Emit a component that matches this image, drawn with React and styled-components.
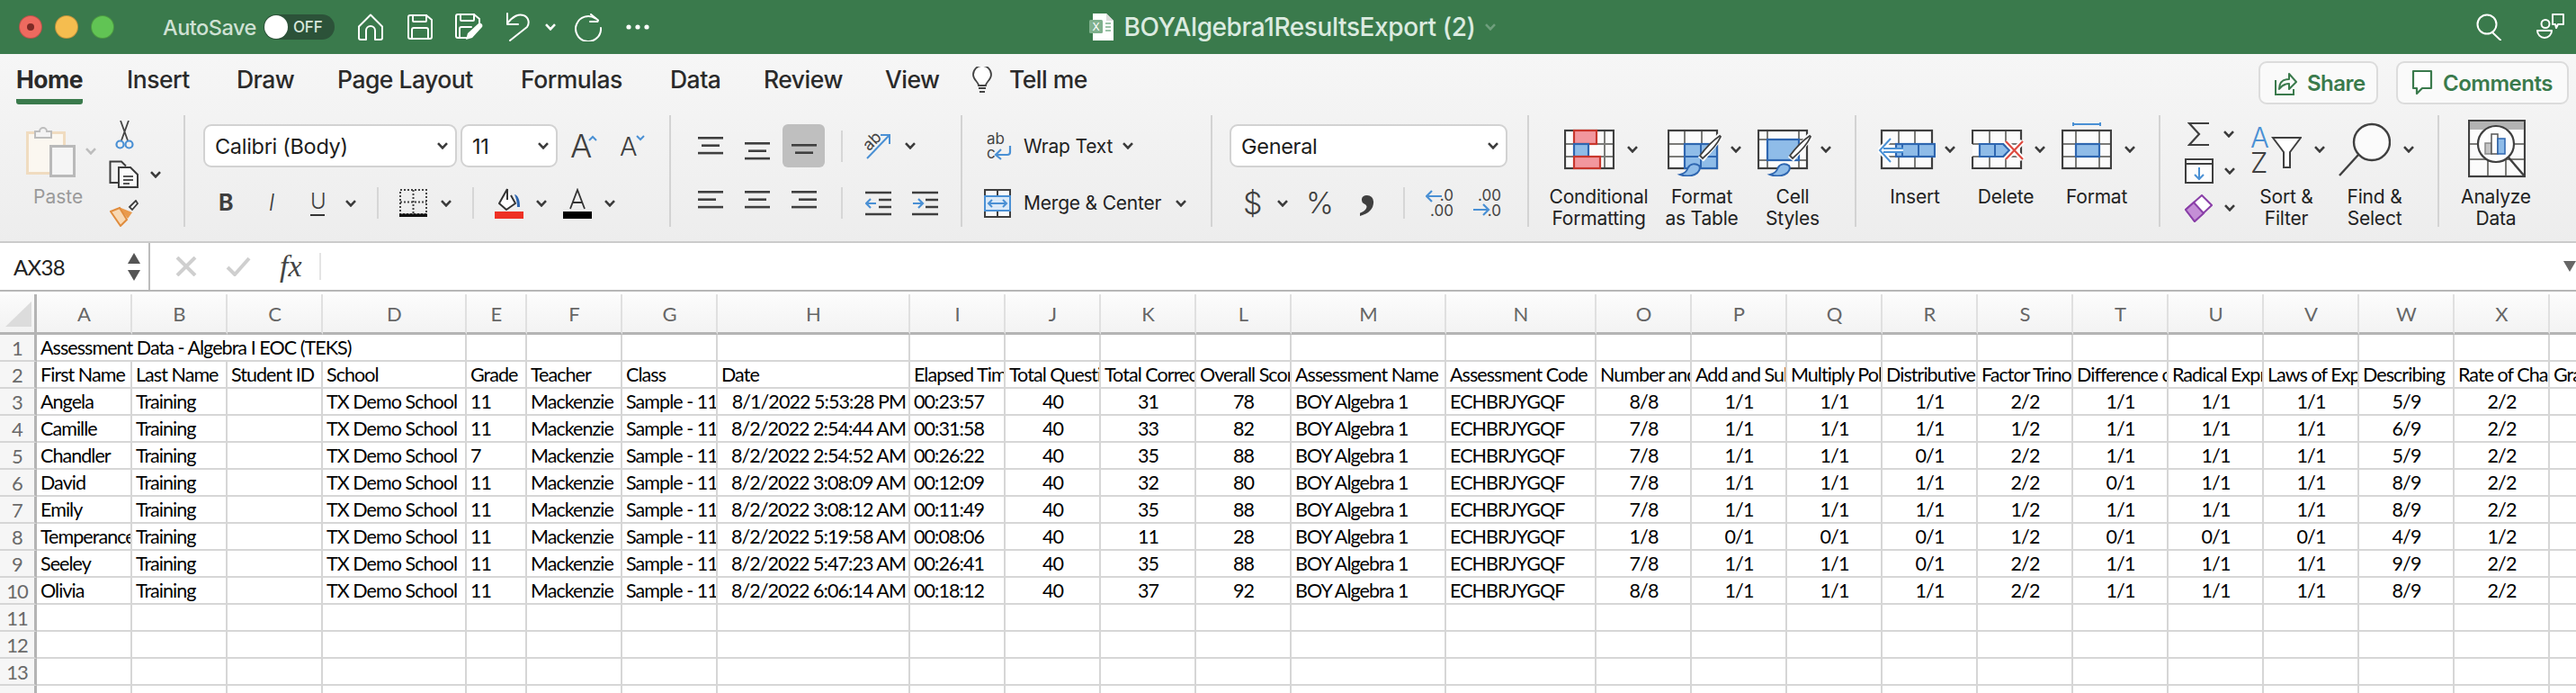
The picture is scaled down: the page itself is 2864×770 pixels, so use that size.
import React from 'react';
import styled, { createGlobalStyle } from 'styled-components';

const GlobalStyle = createGlobalStyle`
  html, body { margin: 0; padding: 0; background: #fff; }
  body { width: 2864px; height: 770px; overflow: hidden; font-family: Inter, "Liberation Sans", sans-serif; }
`;

const DARK = '#3f3f3f';
const GREEN = '#3a7a4c';
const BLUE = '#2e66b0';
const LIGHTBLUE = '#8fbce8';
const SKY = '#4a90d4';
const GRAYLINE = '#7b7b78';

const Window = styled.div`
  width: 2864px;
  height: 770px;
  overflow: hidden;
  display: flex;
  flex-direction: column;
`;

const Svg = styled.svg`
  display: block;
  flex: none;
  margin-left: ${p => p.$ml || 0}px;
`;

/* title bar */
const TitleBar = styled.div`
  height: 60px;
  flex: none;
  background: ${GREEN};
  display: flex;
  align-items: center;
`;
const TitleSide = styled.div`
  flex: 1;
  display: flex;
  align-items: center;
  justify-content: ${p => (p.$right ? 'flex-end' : 'flex-start')};
  padding: ${p => (p.$right ? '0 12px 0 0' : '0 0 0 21px')};
`;
const Light = styled.span`
  width: 26px;
  height: 26px;
  border-radius: 50%;
  flex: none;
  margin-left: ${p => p.$ml || 0}px;
  background: ${p => p.$color};
  border: 1px solid rgba(0, 0, 0, 0.22);
  box-sizing: border-box;
  display: flex;
  align-items: center;
  justify-content: center;
  &::after {
    content: '';
    display: ${p => (p.$dot ? 'block' : 'none')};
    width: 8px;
    height: 8px;
    border-radius: 50%;
    background: #7d2a25;
  }
`;
const AutoSave = styled.span`
  margin-left: 54px;
  width: 112px;
  flex: none;
  font-size: 23.5px;
  color: #cfe1d4;
  font-weight: 500;
  letter-spacing: -0.5px;
`;
const Toggle = styled.div`
  width: 79px;
  height: 28px;
  flex: none;
  border-radius: 14px;
  background: #2c5239;
  display: flex;
  align-items: center;
  box-sizing: border-box;
`;
const Knob = styled.span`
  width: 26px;
  height: 26px;
  margin-left: 1px;
  border-radius: 50%;
  background: #fff;
`;
const ToggleText = styled.span`
  margin-left: 6px;
  font-size: 17px;
  font-weight: 500;
  color: #d8e6dc;
  letter-spacing: -0.2px;
`;
const DocTitle = styled.div`
  display: flex;
  align-items: center;
  flex: none;
`;
const DocName = styled.span`
  margin-left: 11px;
  font-size: 28px;
  font-weight: 500;
  letter-spacing: -0.4px;
  color: #dcebe0;
`;

/* ribbon */
const Ribbon = styled.div`
  height: 210px;
  flex: none;
  box-sizing: border-box;
  background: linear-gradient(#f6f6f6, #ededed);
  border-bottom: 2px solid #cbcbcb;
`;
const TabRow = styled.div`
  height: 68px;
  display: flex;
  align-items: flex-start;
  padding: 0 8px 0 18px;
`;
const Tab = styled.div`
  width: ${p => p.$w}px;
  flex: none;
`;
const TabLabel = styled.div`
  display: inline-block;
  box-sizing: content-box;
  height: 28px;
  line-height: 28px;
  padding-top: 14px;
  padding-bottom: 8px;
  font-size: 26.5px;
  font-weight: ${p => (p.$active ? 700 : 500)};
  letter-spacing: -0.5px;
  color: #2a2a2a;
  white-space: nowrap;
  border-bottom: 6px solid ${p => (p.$active ? GREEN : 'transparent')};
  border-radius: 3px;
`;
const TabIcon = styled.div`
  width: 42px;
  flex: none;
  padding-top: 14px;
`;
const TabSpace = styled.div`
  flex: 1;
`;
const OutlineButton = styled.div`
  width: ${p => p.$w}px;
  height: 48px;
  margin-top: 8px;
  margin-left: ${p => p.$ml || 0}px;
  flex: none;
  box-sizing: border-box;
  border: 2px solid #dcdcdc;
  border-radius: 9px;
  background: #fafafa;
  display: flex;
  align-items: center;
  padding-left: 15px;
  gap: 11px;
  font-size: 24px;
  font-weight: 600;
  letter-spacing: -0.5px;
  color: ${GREEN};
`;

const Groups = styled.div`
  display: flex;
  height: 124px;
`;
const Group = styled.div`
  width: ${p => p.$w}px;
  flex: none;
  box-sizing: border-box;
  padding-left: ${p => p.$pad || 0}px;
  border-right: ${p => (p.$last ? 0 : '2px solid #d3d3d3')};
  display: flex;
  flex-direction: ${p => (p.$stack ? 'column' : 'row')};
`;
const Line = styled.div`
  display: flex;
  align-items: center;
  height: ${p => p.$h}px;
  margin-top: ${p => p.$mt || 0}px;
`;
const Select = styled.div`
  width: ${p => p.$w}px;
  height: 48px;
  flex: none;
  margin-left: ${p => p.$ml || 0}px;
  box-sizing: border-box;
  border: 2px solid #d2d2d2;
  border-radius: 9px;
  background: #fff;
  display: flex;
  align-items: center;
  justify-content: space-between;
  padding: 0 8px 0 11px;
  font-size: 23.5px;
  letter-spacing: -0.3px;
  color: #1c1c1c;
`;
const Letter = styled.span`
  width: ${p => p.$w}px;
  flex: none;
  margin-left: ${p => p.$ml || 0}px;
  text-align: center;
  line-height: 1;
  font-family: ${p => (p.$serif ? '"Liberation Serif", serif' : 'Inter, "Liberation Sans", sans-serif')};
  font-size: ${p => p.$size}px;
  font-weight: ${p => p.$weight || 400};
  font-style: ${p => (p.$italic ? 'italic' : 'normal')};
  transform: translateY(${p => p.$lift || 0}px);
  color: ${DARK};
`;
const UnderLetter = styled(Letter)`
  border-bottom: 2px solid #333;
  padding-bottom: 2px;
`;
const Divider = styled.span`
  width: 2px;
  height: 35px;
  flex: none;
  margin-left: ${p => p.$ml || 0}px;
  background: #d6d6d6;
`;
const Selected = styled.div`
  width: 47px;
  height: 48px;
  flex: none;
  margin-left: ${p => p.$ml || 0}px;
  border-radius: 6px;
  background: #bfbfbf;
  display: flex;
  justify-content: center;
`;
const InlineText = styled.span`
  width: ${p => p.$w}px;
  flex: none;
  margin-left: ${p => p.$ml || 0}px;
  font-size: 21px;
  letter-spacing: -0.2px;
  color: #222;
  white-space: nowrap;
`;
const PasteCol = styled.div`
  width: 92px;
  margin-left: 29px;
  flex: none;
  padding-top: 10px;
`;
const PasteLabel = styled.div`
  margin: 10px 0 0 8px;
  height: 24px;
  line-height: 24px;
  font-size: 21px;
  color: #9a9a9a;
`;
const SmallCol = styled.div`
  flex: none;
  padding-top: ${p => p.$pt || 0}px;
  display: flex;
  flex-direction: column;
  width: ${p => p.$w}px;
`;
const BigButton = styled.div`
  width: ${p => p.$w}px;
  flex: none;
  display: flex;
  flex-direction: column;
`;
const BigIconRow = styled.div`
  height: 76px;
  flex: none;
  display: flex;
  align-items: center;
  margin-bottom: 3px;
`;
const BigLabel = styled.div`
  flex: none;
  text-align: center;
  line-height: 24px;
  font-size: 21px;
  letter-spacing: -0.2px;
  color: #222;
  white-space: pre-line;
`;

/* formula bar */
const FormulaBar = styled.div`
  height: 54px;
  flex: none;
  box-sizing: border-box;
  border-bottom: 2px solid #b6b6b6;
  background: #fff;
  display: flex;
  align-items: stretch;
`;
const NameBox = styled.div`
  width: 167px;
  flex: none;
  box-sizing: border-box;
  border-right: 2px solid #bcbcbc;
  display: flex;
  align-items: center;
  justify-content: space-between;
  padding: 0 9px 0 15px;
  font-family: Lato, sans-serif;
  font-size: 24px;
  letter-spacing: -0.7px;
  color: #222;
`;
const FormulaTools = styled.div`
  display: flex;
  align-items: center;
  flex: 1;
`;
const FxLabel = styled.span`
  margin-left: 32px;
  width: 28px;
  font-family: "Liberation Serif", serif;
  font-style: italic;
  font-size: 34px;
  color: #444;
  white-space: nowrap;
`;
const FormulaSep = styled.span`
  margin-left: 16px;
  width: 2px;
  height: 30px;
  background: #e4e4e4;
`;
const FormulaInput = styled.div`
  flex: 1;
`;

/* sheet */
const Sheet = styled.div`
  margin-top: 3px;
  display: grid;
  grid-template-columns: 41px 106px 106px 106px 160px 67px 106px 106px 214px 106px 106px 106px 106px 172px 167px repeat(11, 106px);
  grid-template-rows: 45px;
  grid-auto-rows: 30px;
  font-family: Lato, sans-serif;
  font-size: 21.5px;
  letter-spacing: -0.95px;
  color: #000;
`;
const Corner = styled.div`
  box-sizing: border-box;
  border-right: 3px solid #b4b4b4;
  border-bottom: 3px solid #b4b4b4;
  background: linear-gradient(#fbfbfb, #f2f2f2);
`;
const ColHead = styled.div`
  box-sizing: border-box;
  border-right: 2px solid #e0e0e0;
  border-bottom: 3px solid #b4b4b4;
  background: linear-gradient(#fcfcfc, #f3f3f3);
  display: flex;
  align-items: center;
  justify-content: center;
  color: #666;
  font-size: 22px;
`;
const RowHead = styled.div`
  box-sizing: border-box;
  border-right: 3px solid #b4b4b4;
  border-bottom: 2px solid #d6d6d6;
  background: #f6f6f6;
  text-align: center;
  line-height: 29px;
  color: #6a6a6a;
  font-size: 22px;
`;
const Cell = styled.div`
  grid-column: span ${p => p.$span || 1};
  box-sizing: border-box;
  border-right: 2px solid #d6d6d6;
  border-bottom: 2px solid #d6d6d6;
  padding: 0 3px 0 4px;
  line-height: 29px;
  white-space: nowrap;
  overflow: hidden;
  text-align: ${p => p.$align || 'left'};
`;

/* --- icons --- */
const Chevron = ({ color = '#3a3a3a', ...p }) => (
  <Svg width="12" height="8" viewBox="0 0 12 8" {...p}>
    <path d="M1 1.2 6 6.4l5-5.2" fill="none" stroke={color} strokeWidth="2.6" />
  </Svg>
);

const WhiteStroke = { fill: 'none', stroke: '#fff', strokeWidth: 2, strokeLinejoin: 'round', strokeLinecap: 'round' };

const HomeIcon = p => (
  <Svg width="30" height="30" viewBox="0 0 30 30" {...p}>
    <path {...WhiteStroke} d="M2 14.5 15 1.5l13 13V27a2 2 0 0 1-2 2h-6V19a5 5 0 0 0-10 0v10H4a2 2 0 0 1-2-2z" />
  </Svg>
);
const SaveIcon = p => (
  <Svg width="28" height="28" viewBox="0 0 28 28" {...p}>
    <path {...WhiteStroke} d="M3 1h18l6 5v19a2 2 0 0 1-2 2H3a2 2 0 0 1-2-2V3a2 2 0 0 1 2-2z" />
    <path {...WhiteStroke} d="M6 1v6a1 1 0 0 0 1 1h13a1 1 0 0 0 1-1V1M5 27V17a2 2 0 0 1 2-2h14a2 2 0 0 1 2 2v10" />
  </Svg>
);
const SaveEditIcon = p => (
  <Svg width="32" height="30" viewBox="0 0 32 30" {...p}>
    <path {...WhiteStroke} d="M13 27H3a2 2 0 0 1-2-2V3a2 2 0 0 1 2-2h18l6 5v9" />
    <path {...WhiteStroke} d="M6 1v6a1 1 0 0 0 1 1h13a1 1 0 0 0 1-1V1M5 27V17a2 2 0 0 1 2-2h11" />
    <path d="M12 29l2-7L26 11c2-1.5 5.5 1.5 4 4L19 27z" fill="#fff" />
  </Svg>
);
const UndoIcon = p => (
  <Svg width="28" height="32" viewBox="0 0 28 32" {...p}>
    <path {...WhiteStroke} d="M2 1v12h12" />
    <path {...WhiteStroke} d="M2 12C8 4 15 1 20 3c6 2 7 9 4 13L5 31" />
  </Svg>
);
const RedoIcon = p => (
  <Svg width="30" height="31" viewBox="0 0 30 31" {...p}>
    <path {...WhiteStroke} d="M23 5.5A14 14 0 1 0 29 16" />
    <path {...WhiteStroke} d="M18 1l8 6.5-0.5 1.5H17" />
  </Svg>
);
const DotsIcon = p => (
  <Svg width="28" height="8" viewBox="0 0 28 8" {...p}>
    <circle cx="4" cy="4" r="2.6" fill="#fff" />
    <circle cx="14" cy="4" r="2.6" fill="#fff" />
    <circle cx="24" cy="4" r="2.6" fill="#fff" />
  </Svg>
);
const FileIcon = p => (
  <Svg width="28" height="30" viewBox="0 0 28 30" {...p}>
    <path d="M4 0h15l8 8v22H4z" fill="#fff" />
    <path d="M19 0l8 8h-8z" fill="#dcdcdc" />
    <rect x="0" y="7" width="15" height="15" rx="1.5" fill="#7fb08d" />
    <text x="7.5" y="19" textAnchor="middle" fontSize="12" fill="#fff" fontFamily="Inter, sans-serif">X</text>
    <path d="M18 10h6v2h-6zM18 14h6v2h-6zM18 18h6v2h-6z" fill="#9cc3a8" />
  </Svg>
);
const SearchIcon = p => (
  <Svg width="28" height="30" viewBox="0 0 28 30" {...p}>
    <circle cx="12" cy="12" r="10.5" {...WhiteStroke} />
    <path {...WhiteStroke} d="M18 21l9 8.5" />
  </Svg>
);
const PeopleIcon = p => (
  <Svg width="32" height="32" viewBox="0 0 32 32" {...p}>
    <circle cx="10" cy="12.5" r="4.5" {...WhiteStroke} />
    <path {...WhiteStroke} d="M1 20h16a8 8 0 0 1-16 0z" />
    <path {...WhiteStroke} d="M18 2h12v11h-6l-2 4-1-4h-3z" />
  </Svg>
);

const BulbIcon = p => (
  <Svg width="24" height="30" viewBox="0 0 24 30" {...p}>
    <path d="M8 21c0-4-6-6-6-12a10 10 0 0 1 20 0c0 6-6 8-6 12z" fill="#fff" stroke="#444" strokeWidth="1.8" />
    <path d="M8 24h8M9 28h6" stroke="#444" strokeWidth="2" />
  </Svg>
);
const ShareIcon = p => (
  <Svg width="26" height="30" viewBox="0 0 26 30" {...p}>
    <path d="M2 12v16h20v-6" fill="none" stroke={GREEN} strokeWidth="2" />
    <path d="M6 22c0-7 4-11 11-11V5l8 9-8 8v-6c-5 0-8 2-11 6z" fill="none" stroke={GREEN} strokeWidth="2" strokeLinejoin="round" />
  </Svg>
);
const CommentIcon = p => (
  <Svg width="24" height="30" viewBox="0 0 24 30" {...p}>
    <path d="M2 2h20v19H12l-6 6v-6H2z" fill="#fff" stroke={GREEN} strokeWidth="2.2" strokeLinejoin="round" />
  </Svg>
);

const PasteIcon = p => (
  <Svg width="55" height="59" viewBox="0 0 55 59" {...p}>
    <rect x="1.5" y="9.5" width="41" height="45" fill="#fbf7f0" stroke="#f0dcc0" strokeWidth="3" />
    <path d="M10 15V8h5a4 4 0 0 1 8 0h5v7z" fill="#f3f3f3" stroke="#bdbdbd" strokeWidth="2" />
    <rect x="27.5" y="24.5" width="26" height="33" fill="#f5f5f5" stroke="#b9b9b9" strokeWidth="3" />
  </Svg>
);
const ScissorsIcon = p => (
  <Svg width="21" height="32" viewBox="0 0 21 32" {...p}>
    <path d="M7 22 15 0M14 22 6 0" stroke="#444" strokeWidth="1.8" fill="none" />
    <circle cx="5.5" cy="26.5" r="4" fill="none" stroke={SKY} strokeWidth="2.2" />
    <circle cx="15.5" cy="26.5" r="4" fill="none" stroke={SKY} strokeWidth="2.2" />
  </Svg>
);
const CopyIcon = p => (
  <Svg width="33" height="31" viewBox="0 0 33 31" {...p}>
    <path d="M11 25H1.5V1.5H14l5 5" fill="none" stroke="#3c3c3c" strokeWidth="2" />
    <path d="M11 8h13l8 8v14H11z" fill="#fbfbfb" stroke="#3c3c3c" strokeWidth="2" />
    <path d="M16 18h11M16 22h11M16 26h7" stroke="#555" strokeWidth="1.8" />
  </Svg>
);
const BrushIcon = p => (
  <Svg width="32" height="30" viewBox="0 0 32 30" {...p}>
    <path d="M22 8 29 1l2 3-6 7z" fill="#fff" stroke="#3c3c3c" strokeWidth="1.8" />
    <path d="M10 8 25 14l-5 7z" fill="#e99a4c" />
    <path d="M1 13l10-4 8 13-7 7z" fill="#f8d9b4" stroke="#e08c3d" strokeWidth="2" />
  </Svg>
);
const CaretSvg = styled(Svg)`
  align-self: flex-start;
  margin-top: 12px;
`;
const CaretUp = ({ color = SKY, down, ...p }) => (
  <CaretSvg width="10" height="7" viewBox="0 0 10 7" {...p}>
    <path d={down ? 'M1 1l4 4 4-4' : 'M1 6l4-4 4 4'} fill="none" stroke={color} strokeWidth="2" />
  </CaretSvg>
);
const BorderIcon = p => (
  <Svg width="31" height="31" viewBox="0 0 31 31" {...p}>
    <path d="M1 1h29v27H1zM15.5 1v27M1 14.5h29" fill="none" stroke="#444" strokeWidth="2" strokeDasharray="2 2" />
    <rect x="0" y="27.5" width="31" height="3.5" fill="#111" />
  </Svg>
);
const FillIcon = p => (
  <Svg width="32" height="34" viewBox="0 0 32 34" {...p}>
    <path d="M14 1 5 17l8 7 10-7-5-9" fill="#fff" stroke="#333" strokeWidth="2" strokeLinejoin="round" />
    <path d="M14 1v12" stroke="#333" strokeWidth="2" />
    <path d="M22 7c4 1 6 6 6 14h-3c0-5-1-9-3-14z" fill={BLUE} />
    <rect x="0" y="26" width="32" height="8" fill="#ee3124" />
  </Svg>
);
const AlignIcon = ({ top, kind = 'c', ...p }) => {
  const w = [28, 20, 28];
  const xs = i => {
    if (kind === 'l') return 0;
    if (kind === 'r') return 28 - w[i];
    return (28 - w[i]) / 2;
  };
  return (
    <Svg width="28" height="36" viewBox="0 0 28 36" {...p}>
      {[0, 1, 2].map(i => (
        <rect key={i} x={xs(i)} y={top + i * 8.4} width={w[i]} height="2.6" fill="#3f3f3f" />
      ))}
    </Svg>
  );
};
const OrientIcon = p => (
  <Svg width="31" height="32" viewBox="0 0 31 32" {...p}>
    <text x="0" y="18" fontSize="18" fill="#444" fontFamily="Inter, sans-serif" transform="rotate(-45 8 14)">ab</text>
    <path d="M3 30 27 5M18 4h10v10" fill="none" stroke={SKY} strokeWidth="2" />
  </Svg>
);
const IndentIcon = ({ reverse, ...p }) => (
  <Svg width="29" height="28" viewBox="0 0 29 28" {...p}>
    <path d="M0 2h29M0 26h29M15 10h14M15 18h14" stroke="#3f3f3f" strokeWidth="2.6" />
    <path d={reverse ? 'M12 14H1M6 9l-5 5 5 5' : 'M1 14h11M7 9l5 5-5 5'} fill="none" stroke={SKY} strokeWidth="2.2" />
  </Svg>
);
const WrapIcon = p => (
  <Svg width="30" height="32" viewBox="0 0 30 32" {...p}>
    <text x="0" y="14" fontSize="17" fill="#444" fontFamily="Inter, sans-serif">ab</text>
    <text x="0" y="30" fontSize="17" fill="#444" fontFamily="Inter, sans-serif">c</text>
    <path d="M26 16v7a3 3 0 0 1-3 3H11M16 20l-6 6 6 5" fill="none" stroke={SKY} strokeWidth="2.2" />
  </Svg>
);
const MergeIcon = p => (
  <Svg width="30" height="32" viewBox="0 0 30 32" {...p}>
    <path d="M1 1h28v30H1zM15 1v7M15 24v7" fill="#fafafa" stroke="#3f3f3f" strokeWidth="2" />
    <rect x="1" y="8" width="28" height="16" fill="#dbeaf8" stroke={SKY} strokeWidth="2" />
    <path d="M5 16h20M9 12l-4 4 4 4M21 12l4 4-4 4" fill="none" stroke={SKY} strokeWidth="2" />
  </Svg>
);
const DecimalIcon = ({ increase, ...p }) => (
  <Svg width="32" height="34" viewBox="0 0 32 34" {...p}>
    {increase ? (
      <>
        <text x="32" y="14" textAnchor="end" fontSize="17" fill="#444" fontFamily="Inter, sans-serif">.00</text>
        <text x="32" y="31" textAnchor="end" fontSize="17" fill="#444" fontFamily="Inter, sans-serif">.0</text>
        <path d="M1 24h17M12 18l6 6-6 6" fill="none" stroke={SKY} strokeWidth="2.2" />
      </>
    ) : (
      <>
        <text x="31" y="14" textAnchor="end" fontSize="17" fill="#444" fontFamily="Inter, sans-serif">.0</text>
        <text x="31" y="31" textAnchor="end" fontSize="17" fill="#444" fontFamily="Inter, sans-serif">.00</text>
        <path d="M18 9H1M7 3 1 9l6 6" fill="none" stroke={SKY} strokeWidth="2.2" />
      </>
    )}
  </Svg>
);

/* sheet-like drawing used by the big ribbon icons */
const GridArt = ({ x = 1, w = 54, vs = [], hs = [], notch }) => (
  <>
    <rect x={x} y="9" width={w} height="42" fill="#fbfbfb" />
    {vs.map(v => <path key={`v${v}`} d={`M${x + v} 9v42`} stroke={GRAYLINE} strokeWidth="2" />)}
    {hs.map(h => <path key={`h${h}`} d={`M${x} ${9 + h}h${w}`} stroke={GRAYLINE} strokeWidth="2" />)}
    {notch
      ? <path d={`M${x} 24V9h${w}v42H${x}V38`} fill="none" stroke={DARK} strokeWidth="2.2" />
      : <rect x={x} y="9" width={w} height="42" fill="none" stroke={DARK} strokeWidth="2.2" />}
  </>
);
const PaintBrush = () => (
  <>
    <path d="M59 15 37 41" stroke="#fff" strokeWidth="8" />
    <path d="M58 15c-6 4-16 14-22 22l3 3c8-7 17-17 20-24z" fill="#fff" stroke={DARK} strokeWidth="1.8" />
    <path d="M14 58c5-1 7-3 9-8 2-4 8-5 12-2 2 3 0 8-5 10-5 2-11 2-16 0z" fill={LIGHTBLUE} stroke={BLUE} strokeWidth="2" />
  </>
);
const ConditionalIcon = p => (
  <Svg width="56" height="60" viewBox="0 0 56 60" {...p}>
    <GridArt vs={[10, 26, 44]} hs={[15, 29]} />
    <rect x="11" y="9" width="25" height="15" fill="#f2979e" stroke="#c8372d" strokeWidth="2.2" />
    <rect x="11" y="24" width="16" height="14" fill={LIGHTBLUE} stroke={BLUE} strokeWidth="2.2" />
    <rect x="11" y="38" width="29" height="13" fill="#f2979e" stroke="#c8372d" strokeWidth="2.2" />
  </Svg>
);
const FormatTableIcon = p => (
  <Svg width="61" height="60" viewBox="0 0 61 60" {...p}>
    <GridArt vs={[18, 37]} hs={[15, 29]} />
    <rect x="19" y="24" width="36" height="27" fill={LIGHTBLUE} stroke={BLUE} strokeWidth="2.2" />
    <path d="M19 38h36M37 24v27" stroke={BLUE} strokeWidth="2" />
    <PaintBrush />
  </Svg>
);
const CellStylesIcon = p => (
  <Svg width="61" height="60" viewBox="0 0 61 60" {...p}>
    <GridArt vs={[10, 45]} hs={[10, 33]} />
    <rect x="11" y="19" width="35" height="23" fill={LIGHTBLUE} stroke={BLUE} strokeWidth="2.2" />
    <PaintBrush />
  </Svg>
);
const InsertCellsIcon = p => (
  <Svg width="64" height="60" viewBox="0 0 64 60" {...p}>
    <GridArt x={4} w={56} vs={[19, 37]} hs={[15, 29]} />
    <rect x="20" y="24" width="43" height="14" fill={LIGHTBLUE} stroke={BLUE} strokeWidth="2.2" />
    <path d="M27 24v14M45 24v14" stroke={BLUE} strokeWidth="2" />
    <path d="M28 31H2M14 18 2 31l12 13" fill="none" stroke="#fff" strokeWidth="6" />
    <path d="M28 29H6M28 33H6M14 18 2 31l12 13" fill="none" stroke={SKY} strokeWidth="2" />
  </Svg>
);
const DeleteCellsIcon = p => (
  <Svg width="59" height="60" viewBox="0 0 59 60" {...p}>
    <GridArt vs={[19, 37]} hs={[15, 29]} notch />
    <path d="M9 24h26l7 7-7 7H9z" fill={LIGHTBLUE} stroke={BLUE} strokeWidth="2.2" />
    <path d="M26 24v14" stroke={BLUE} strokeWidth="2" />
    <path d="M38 21l19 20M57 21 38 41" stroke="#fff" strokeWidth="6" />
    <path d="M38 21l19 20M57 21 38 41" stroke="#de4a3f" strokeWidth="2.2" />
  </Svg>
);
const FormatCellsIcon = p => (
  <Svg width="56" height="60" viewBox="0 0 56 60" {...p}>
    <path d="M13 2h30M13 0v4M43 0v4" stroke={SKY} strokeWidth="2" />
    <GridArt vs={[15, 41]} hs={[15, 29]} />
    <rect x="16" y="24" width="26" height="14" fill={LIGHTBLUE} stroke={BLUE} strokeWidth="2.2" />
  </Svg>
);
const SumIcon = p => (
  <Svg width="24" height="28" viewBox="0 0 24 28" {...p}>
    <path d="M24 2H2l11 12L2 26h22" fill="none" stroke={DARK} strokeWidth="2.2" />
  </Svg>
);
const FillDownIcon = p => (
  <Svg width="32" height="28" viewBox="0 0 32 28" {...p}>
    <rect x="1" y="1" width="30" height="26" fill="#fdfdfd" stroke={DARK} strokeWidth="2" />
    <path d="M1 6h30" stroke={DARK} strokeWidth="2" />
    <path d="M16 10v13M11 18l5 5 5-5" fill="none" stroke={SKY} strokeWidth="2" />
  </Svg>
);
const EraserIcon = p => (
  <Svg width="31" height="31" viewBox="0 0 31 31" {...p}>
    <path d="M19 1l11 11L11 30 1 17z" fill="#fff" stroke="#8a3fa8" strokeWidth="2" />
    <path d="M10 9l11 12-10 9L1 17z" fill="#c48fd6" stroke="#8a3fa8" strokeWidth="2" />
  </Svg>
);
const SortIcon = p => (
  <Svg width="57" height="60" viewBox="0 0 57 60" {...p}>
    <text x="0" y="28" fontSize="31" fill={SKY} fontFamily="Inter, sans-serif" fontWeight="300">A</text>
    <text x="0" y="56" fontSize="31" fill={DARK} fontFamily="Inter, sans-serif" fontWeight="300">Z</text>
    <path d="M25 17h31L44 33v17h-7V33z" fill="#fff" stroke={DARK} strokeWidth="2" />
  </Svg>
);
const FindIcon = p => (
  <Svg width="58" height="60" viewBox="0 0 58 60" {...p}>
    <circle cx="37" cy="22" r="20" fill="#fbfbfb" stroke={DARK} strokeWidth="2.4" />
    <path d="M22 36 1 59" stroke={DARK} strokeWidth="2.4" />
  </Svg>
);
const AnalyzeIcon = p => (
  <Svg width="64" height="66" viewBox="0 0 64 66" {...p}>
    <rect x="1" y="1" width="62" height="62" fill="#fbfbfb" stroke={DARK} strokeWidth="2.2" />
    <rect x="2" y="2" width="60" height="9" fill="#b3b3b3" />
    <path d="M2 27h60M2 44h60M22 44v18M42 44v18" stroke={GRAYLINE} strokeWidth="2" />
    <circle cx="31" cy="27" r="20" fill="#fdfdfd" stroke={DARK} strokeWidth="2.2" />
    <rect x="19" y="26" width="7" height="12" fill="#c4c4c4" stroke="#888" strokeWidth="1.5" />
    <rect x="26" y="16" width="7" height="22" fill="#fff" stroke="#555" strokeWidth="1.5" />
    <rect x="33" y="21" width="8" height="17" fill={LIGHTBLUE} stroke={BLUE} strokeWidth="1.5" />
    <path d="M45 42l18 21" stroke={DARK} strokeWidth="2.4" />
  </Svg>
);
const Triangle = ({ dir, color = '#555', ...p }) => (
  <Svg width="14" height="12" viewBox="0 0 14 12" {...p}>
    <path d={dir === 'up' ? 'M7 0l7 12H0z' : 'M0 0h14L7 12z'} fill={color} />
  </Svg>
);
const Stepper = styled.div`
  display: flex;
  flex-direction: column;
  gap: 7px;
`;

/* --- sheet data --- */
const COLS = 'ABCDEFGHIJKLMNOPQRSTUVWXY'.split('');
const HEADERS = ['First Name', 'Last Name', 'Student ID', 'School', 'Grade', 'Teacher', 'Class', 'Date', 'Elapsed Time', 'Total Questions', 'Total Correct', 'Overall Score', 'Assessment Name', 'Assessment Code', 'Number and Quantity', 'Add and Subtract', 'Multiply Polynomials', 'Distributive Property', 'Factor Trinomials', 'Difference of Squares', 'Radical Expressions', 'Laws of Exponents', 'Describing', 'Rate of Change', 'Graphing'];
const CENTERED = new Set([9, 10, 11, 14, 15, 16, 17, 18, 19, 20, 21, 22, 23]);
const STUDENTS = [
  ['Angela', '11', '8/1/2022 5:53:28 PM', '00:23:57', '31', '78', '8/8', '1/1 1/1 1/1 2/2 1/1 1/1 1/1 5/9 2/2'],
  ['Camille', '11', '8/2/2022 2:54:44 AM', '00:31:58', '33', '82', '7/8', '1/1 1/1 1/1 1/2 1/1 1/1 1/1 6/9 2/2'],
  ['Chandler', '7', '8/2/2022 2:54:52 AM', '00:26:22', '35', '88', '7/8', '1/1 1/1 0/1 2/2 1/1 1/1 1/1 5/9 2/2'],
  ['David', '11', '8/2/2022 3:08:09 AM', '00:12:09', '32', '80', '7/8', '1/1 1/1 1/1 2/2 0/1 1/1 1/1 8/9 2/2'],
  ['Emily', '11', '8/2/2022 3:08:12 AM', '00:11:49', '35', '88', '7/8', '1/1 1/1 1/1 1/2 1/1 1/1 1/1 8/9 2/2'],
  ['Temperance', '11', '8/2/2022 5:19:58 AM', '00:08:06', '11', '28', '1/8', '0/1 0/1 0/1 1/2 0/1 0/1 0/1 4/9 1/2'],
  ['Seeley', '11', '8/2/2022 5:47:23 AM', '00:26:41', '35', '88', '7/8', '1/1 1/1 0/1 2/2 1/1 1/1 1/1 9/9 2/2'],
  ['Olivia', '11', '8/2/2022 6:06:14 AM', '00:18:12', '37', '92', '8/8', '1/1 1/1 1/1 2/2 1/1 1/1 1/1 8/9 2/2'],
];
const toRow = ([first, grade, date, time, correct, score, number, rest]) => [
  first, 'Training', '', 'TX Demo School', grade, 'Mackenzie', 'Sample - 11', date, time, '40', correct, score,
  'BOY Algebra 1', 'ECHBRJYGQF', number, ...rest.split(' '), '',
];
const cellAlign = i => {
  if (i === 7) return 'right';
  return CENTERED.has(i) ? 'center' : 'left';
};

const Big = ({ w, ml, gap, label, icon }) => (
  <BigButton $w={w}>
    <BigIconRow>
      {React.cloneElement(icon, { $ml: ml })}
      {gap != null && <Chevron $ml={gap} />}
    </BigIconRow>
    <BigLabel>{label}</BigLabel>
  </BigButton>
);

const Tabs = [['Home', 123], ['Insert', 122], ['Draw', 112], ['Page Layout', 204], ['Formulas', 166], ['Data', 104], ['Review', 135], ['View', 96]];

const App = () => (
  <Window>
    <GlobalStyle />
    <TitleBar>
      <TitleSide>
        <Light $color="#ee6a5f" $dot />
        <Light $color="#f5bd4f" $ml={14} />
        <Light $color="#61c454" $ml={14} />
        <AutoSave>AutoSave</AutoSave>
        <Toggle>
          <Knob />
          <ToggleText>OFF</ToggleText>
        </Toggle>
        <HomeIcon $ml={25} />
        <SaveIcon $ml={26} />
        <SaveEditIcon $ml={25} />
        <UndoIcon $ml={24} />
        <Chevron color="#fff" $ml={16} />
        <RedoIcon $ml={21} />
        <DotsIcon $ml={26} />
      </TitleSide>
      <DocTitle>
        <FileIcon />
        <DocName>BOYAlgebra1ResultsExport (2)</DocName>
        <Chevron color="#6f9f7d" $ml={10} />
      </DocTitle>
      <TitleSide $right>
        <SearchIcon />
        <PeopleIcon $ml={39} />
      </TitleSide>
    </TitleBar>

    <Ribbon>
      <TabRow>
        {Tabs.map(([name, w], i) => (
          <Tab key={name} $w={w}><TabLabel $active={i === 0}>{name}</TabLabel></Tab>
        ))}
        <TabIcon><BulbIcon /></TabIcon>
        <TabLabel>Tell me</TabLabel>
        <TabSpace />
        <OutlineButton $w={133}><ShareIcon />Share</OutlineButton>
        <OutlineButton $w={192} $ml={20}><CommentIcon />Comments</OutlineButton>
      </TabRow>
      <Groups>
        <Group $w={206}>
          <PasteCol>
            <Line $h={59}>
              <PasteIcon />
              <Chevron color="#bdbdbd" $ml={11} />
            </Line>
            <PasteLabel>Paste</PasteLabel>
          </PasteCol>
          <SmallCol $pt={6} $w={70}>
            <Line $h={32}><ScissorsIcon $ml={7} /></Line>
            <Line $h={31} $mt={12}><CopyIcon /><Chevron $ml={13} /></Line>
            <Line $h={30} $mt={13}><BrushIcon $ml={1} /></Line>
          </SmallCol>
        </Group>

        <Group $w={540} $pad={20} $stack>
          <Line $h={48} $mt={10}>
            <Select $w={282}>Calibri (Body)<Chevron /></Select>
            <Select $w={108} $ml={4}>11<Chevron /></Select>
            <Letter $w={20} $ml={14} $size={36} $weight={300}>A</Letter>
            <CaretUp />
            <Letter $w={18} $ml={25} $size={29} $weight={300}>A</Letter>
            <CaretUp down />
          </Line>
          <Line $h={35} $mt={22}>
            <Letter $w={15} $ml={17} $size={25} $weight={700}>B</Letter>
            <Letter $w={12} $ml={38} $size={25} $weight={300} $italic>I</Letter>
            <UnderLetter $w={16} $ml={37} $size={24} $weight={300}>U</UnderLetter>
            <Chevron $ml={23} />
            <Divider $ml={23} />
            <BorderIcon $ml={23} />
            <Chevron $ml={15} />
            <Divider $ml={23} />
            <FillIcon $ml={23} />
            <Chevron $ml={14} />
            <Svg width="32" height="34" viewBox="0 0 32 34" $ml={18}>
              <path d="M8 23 16 2l8 21M10.5 16h11" fill="none" stroke="#333" strokeWidth="1.8" />
              <rect x="0" y="26" width="32" height="8" fill="#000" />
            </Svg>
            <Chevron $ml={14} />
          </Line>
        </Group>

        <Group $w={324} $pad={30} $stack>
          <Line $h={48} $mt={10}>
            <AlignIcon top={8} />
            <AlignIcon top={14} $ml={24} />
            <Selected $ml={14}><AlignIcon top={22} /></Selected>
            <Divider $ml={18} />
            <OrientIcon $ml={24} />
            <Chevron $ml={14} />
          </Line>
          <Line $h={35} $mt={22}>
            <AlignIcon top={4} kind="l" />
            <AlignIcon top={4} $ml={24} />
            <AlignIcon top={4} kind="r" $ml={24} />
            <Divider $ml={27} />
            <IndentIcon reverse $ml={25} />
            <IndentIcon $ml={23} />
          </Line>
        </Group>

        <Group $w={278} $pad={24} $stack>
          <Line $h={48} $mt={10}>
            <WrapIcon $ml={3} />
            <InlineText $w={110} $ml={11}>Wrap Text</InlineText>
            <Chevron />
          </Line>
          <Line $h={35} $mt={22}>
            <MergeIcon />
            <InlineText $w={169} $ml={14}>Merge &amp; Center</InlineText>
            <Chevron />
          </Line>
        </Group>

        <Group $w={352} $pad={19} $stack>
          <Line $h={48} $mt={10}>
            <Select $w={309}>General<Chevron /></Select>
          </Line>
          <Line $h={35} $mt={22}>
            <Letter $w={16} $ml={15} $size={34} $weight={300}>$</Letter>
            <Chevron $ml={22} />
            <Letter $w={30} $ml={20} $size={33} $weight={300}>%</Letter>
            <Letter $w={17} $ml={29} $size={76} $weight={700} $serif $lift={-24}>,</Letter>
            <Divider $ml={32} />
            <DecimalIcon $ml={23} />
            <DecimalIcon increase $ml={20} />
          </Line>
        </Group>

        <Group $w={364} $pad={15}>
          <Big w={125} ml={24} gap={14} label={'Conditional\nFormatting'} icon={<ConditionalIcon />} />
          <Big w={104} ml={14} gap={9} label={'Format\nas Table'} icon={<FormatTableIcon />} />
          <Big w={98} ml={10} gap={9} label={'Cell\nStyles'} icon={<CellStylesIcon />} />
        </Group>

        <Group $w={338} $pad={11}>
          <Big w={108} ml={13} gap={10} label="Insert" icon={<InsertCellsIcon />} />
          <Big w={94} ml={9} gap={11} label="Delete" icon={<DeleteCellsIcon />} />
          <Big w={108} ml={15} gap={14} label="Format" icon={<FormatCellsIcon />} />
        </Group>

        <Group $w={310} $pad={27}>
          <SmallCol $w={63}>
            <Line $h={44}><SumIcon $ml={3} /><Chevron $ml={16} /></Line>
            <Line $h={44}><FillDownIcon /><Chevron $ml={12} /></Line>
            <Line $h={44}><EraserIcon /><Chevron $ml={13} /></Line>
          </SmallCol>
          <Big w={100} ml={10} gap={14} label={'Sort &\nFilter'} icon={<SortIcon />} />
          <Big w={96} ml={8} gap={14} label={'Find &\nSelect'} icon={<FindIcon />} />
        </Group>

        <Group $w={152} $pad={13} $last>
          <Big w={100} ml={19} label={'Analyze\nData'} icon={<AnalyzeIcon />} />
        </Group>
      </Groups>
    </Ribbon>

    <FormulaBar>
      <NameBox>
        AX38
        <Stepper>
          <Triangle dir="up" />
          <Triangle dir="down" />
        </Stepper>
      </NameBox>
      <FormulaTools>
        <Svg width="24" height="22" viewBox="0 0 24 22" $ml={28}>
          <path d="M2 1l20 20M22 1 2 21" stroke="#cfcfcf" strokeWidth="4" />
        </Svg>
        <Svg width="28" height="22" viewBox="0 0 28 22" $ml={32}>
          <path d="M2 12l8 8L26 2" fill="none" stroke="#cfcfcf" strokeWidth="4" />
        </Svg>
        <FxLabel>fx</FxLabel>
        <FormulaSep />
        <FormulaInput />
        <Triangle dir="down" color="#666" />
      </FormulaTools>
    </FormulaBar>

    <Sheet>
      <Corner>
        <Svg width="38" height="42" viewBox="0 0 38 42">
          <path d="M35 8v28H6z" fill="#dcdcdc" />
        </Svg>
      </Corner>
      {COLS.map(c => <ColHead key={c}>{c}</ColHead>)}

      <RowHead>1</RowHead>
      <Cell $span={4}>Assessment Data - Algebra I EOC (TEKS)</Cell>
      {COLS.slice(4).map(c => <Cell key={c} />)}

      <RowHead>2</RowHead>
      {HEADERS.map(h => <Cell key={h}>{h}</Cell>)}

      {STUDENTS.map((s, r) => (
        <React.Fragment key={s[0]}>
          <RowHead>{r + 3}</RowHead>
          {toRow(s).map((v, i) => <Cell key={COLS[i]} $align={cellAlign(i)}>{v}</Cell>)}
        </React.Fragment>
      ))}

      {[11, 12, 13, 14].map(n => (
        <React.Fragment key={n}>
          <RowHead>{n}</RowHead>
          {COLS.map(c => <Cell key={c} />)}
        </React.Fragment>
      ))}
    </Sheet>
  </Window>
);

export default App;
